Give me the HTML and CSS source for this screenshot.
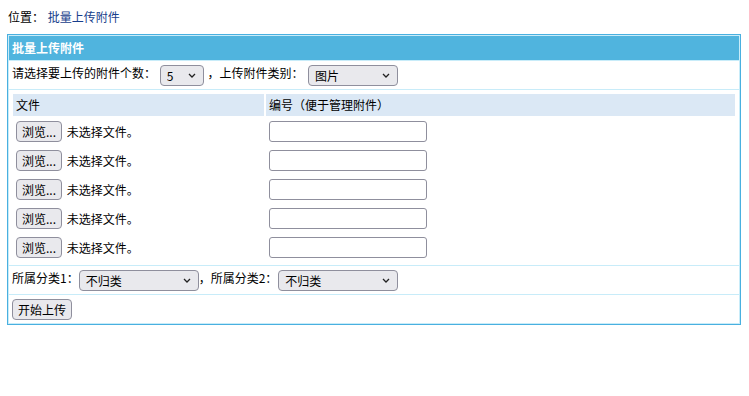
FILE: index.html
```html
<!DOCTYPE html>
<html lang="zh-CN">
<head>
<meta charset="utf-8">
<title>批量上传附件</title>
<link rel="stylesheet" href="styles.css">
</head>
<body>
<div class="crumb">位置： <a class="crumb-link" href="#">批量上传附件</a></div>
<table class="box">
  <tr><td class="box-head">批量上传附件</td></tr>
  <tr><td class="box-row">请选择要上传的附件个数： <span class="sel sp"><select class="s-num"><option>5</option></select><svg class="chev" width="8" height="5" viewBox="0 0 8 5"><path d="M1 1 L4 4 L7 1" fill="none" stroke="#222" stroke-width="1.3"/></svg></span> ，上传附件类别： <span class="sel sp-b"><select class="s-type"><option>图片</option></select><svg class="chev" width="8" height="5" viewBox="0 0 8 5"><path d="M1 1 L4 4 L7 1" fill="none" stroke="#222" stroke-width="1.3"/></svg></span></td></tr>
  <tr><td class="box-files">
    <table class="files">
      <colgroup><col class="c1"><col class="c2"></colgroup>
      <tr><th>文件</th><th>编号（便于管理附件）</th></tr>
      <tr><td><button class="btn" type="button">浏览...</button> <span class="nofile">未选择文件。</span></td><td><input class="txt" type="text"></td></tr>
      <tr><td><button class="btn" type="button">浏览...</button> <span class="nofile">未选择文件。</span></td><td><input class="txt" type="text"></td></tr>
      <tr><td><button class="btn" type="button">浏览...</button> <span class="nofile">未选择文件。</span></td><td><input class="txt" type="text"></td></tr>
      <tr><td><button class="btn" type="button">浏览...</button> <span class="nofile">未选择文件。</span></td><td><input class="txt" type="text"></td></tr>
      <tr><td><button class="btn" type="button">浏览...</button> <span class="nofile">未选择文件。</span></td><td><input class="txt" type="text"></td></tr>
    </table>
  </td></tr>
  <tr><td class="box-row">所属分类1：<span class="sel"><select class="s-cat"><option>不归类</option></select><svg class="chev" width="8" height="5" viewBox="0 0 8 5"><path d="M1 1 L4 4 L7 1" fill="none" stroke="#222" stroke-width="1.3"/></svg></span>，所属分类2：<span class="sel sp2"><select class="s-cat"><option>不归类</option></select><svg class="chev" width="8" height="5" viewBox="0 0 8 5"><path d="M1 1 L4 4 L7 1" fill="none" stroke="#222" stroke-width="1.3"/></svg></span></td></tr>
  <tr><td class="box-row"><button class="btn btn-go" type="button">开始上传</button></td></tr>
</table>
</body>
</html>
```
FILE: styles.css
```css
html, body {
  margin: 0;
  padding: 0;
  background: #fff;
}
body {
  font-family: "Noto Sans CJK SC", "Microsoft YaHei", sans-serif;
  font-size: 12px;
  color: #000;
}
.crumb {
  padding: 8px 0 0 8px;
  line-height: 18px;
  height: 18px;
  margin-bottom: 8px;
}
.crumb-link {
  color: #173e8c;
  text-decoration: none;
  margin-left: 1px;
}
.box {
  margin-left: 7px;
  width: 734px;
  border: 1px solid #49b0e0;
  background: #c8ecf9;
  border-collapse: separate;
  border-spacing: 1px;
}
.box > tbody > tr > td {
  background: #fff;
  padding: 0 3px;
  vertical-align: middle;
}
.box > tbody > tr > td.box-head {
  background: #50b4de;
  color: #fff;
  font-weight: bold;
  height: 24px;
  line-height: 24px;
}
.box > tbody > tr > td.box-row {
  height: 28px;
  line-height: 17px;
}
.box > tbody > tr > td.box-files {
  padding: 2px;
}
.files {
  width: 100%;
  table-layout: fixed;
  border-collapse: separate;
  border-spacing: 2px;
}
.files col.c1 { width: 251px; }
.files th {
  background: #dbe8f5;
  font-weight: normal;
  text-align: left;
  height: 22px;
  padding: 0 3px;
  line-height: 22px;
}
.files td {
  height: 27px;
  padding: 0 3px;
  vertical-align: middle;
  line-height: 17px;
}
.sel {
  position: relative;
  display: inline-block;
  vertical-align: middle;
}
.sel.sp { margin: 0 1px; }
.sel.sp-b { margin-left: 2px; }
.sel.sp2 { margin-left: 1px; }
.sel select {
  -webkit-appearance: none;
  appearance: none;
  display: block;
  height: 21px;
  box-sizing: border-box;
  border: 1px solid #8f8f9d;
  border-radius: 4px;
  background: #e9e9ed;
  font-family: inherit;
  font-size: 12px;
  color: #000;
  padding: 0 0 0 6px;
  margin: 0;
  line-height: 19px;
}
.s-num { width: 44px; }
.s-type { width: 90px; }
.s-cat { width: 120px; }
.chev {
  position: absolute;
  right: 8px;
  top: 8px;
  pointer-events: none;
}
.btn {
  -webkit-appearance: none;
  appearance: none;
  height: 21px;
  box-sizing: border-box;
  border: 1px solid #8f8f9d;
  border-radius: 4px;
  background: #e9e9ed;
  font-family: inherit;
  font-size: 12px;
  color: #000;
  padding: 0 5px;
  margin: 0;
  line-height: 19px;
  vertical-align: middle;
}
.btn-go { padding: 0 5px; }
.nofile {
  vertical-align: middle;
  margin-left: 2px;
}
.txt {
  width: 158px;
  height: 21px;
  box-sizing: border-box;
  border: 1px solid #8f8f9d;
  border-radius: 3px;
  background: #fff;
  margin: 0;
  padding: 0 3px;
  vertical-align: middle;
  font-family: inherit;
  font-size: 12px;
}
```
